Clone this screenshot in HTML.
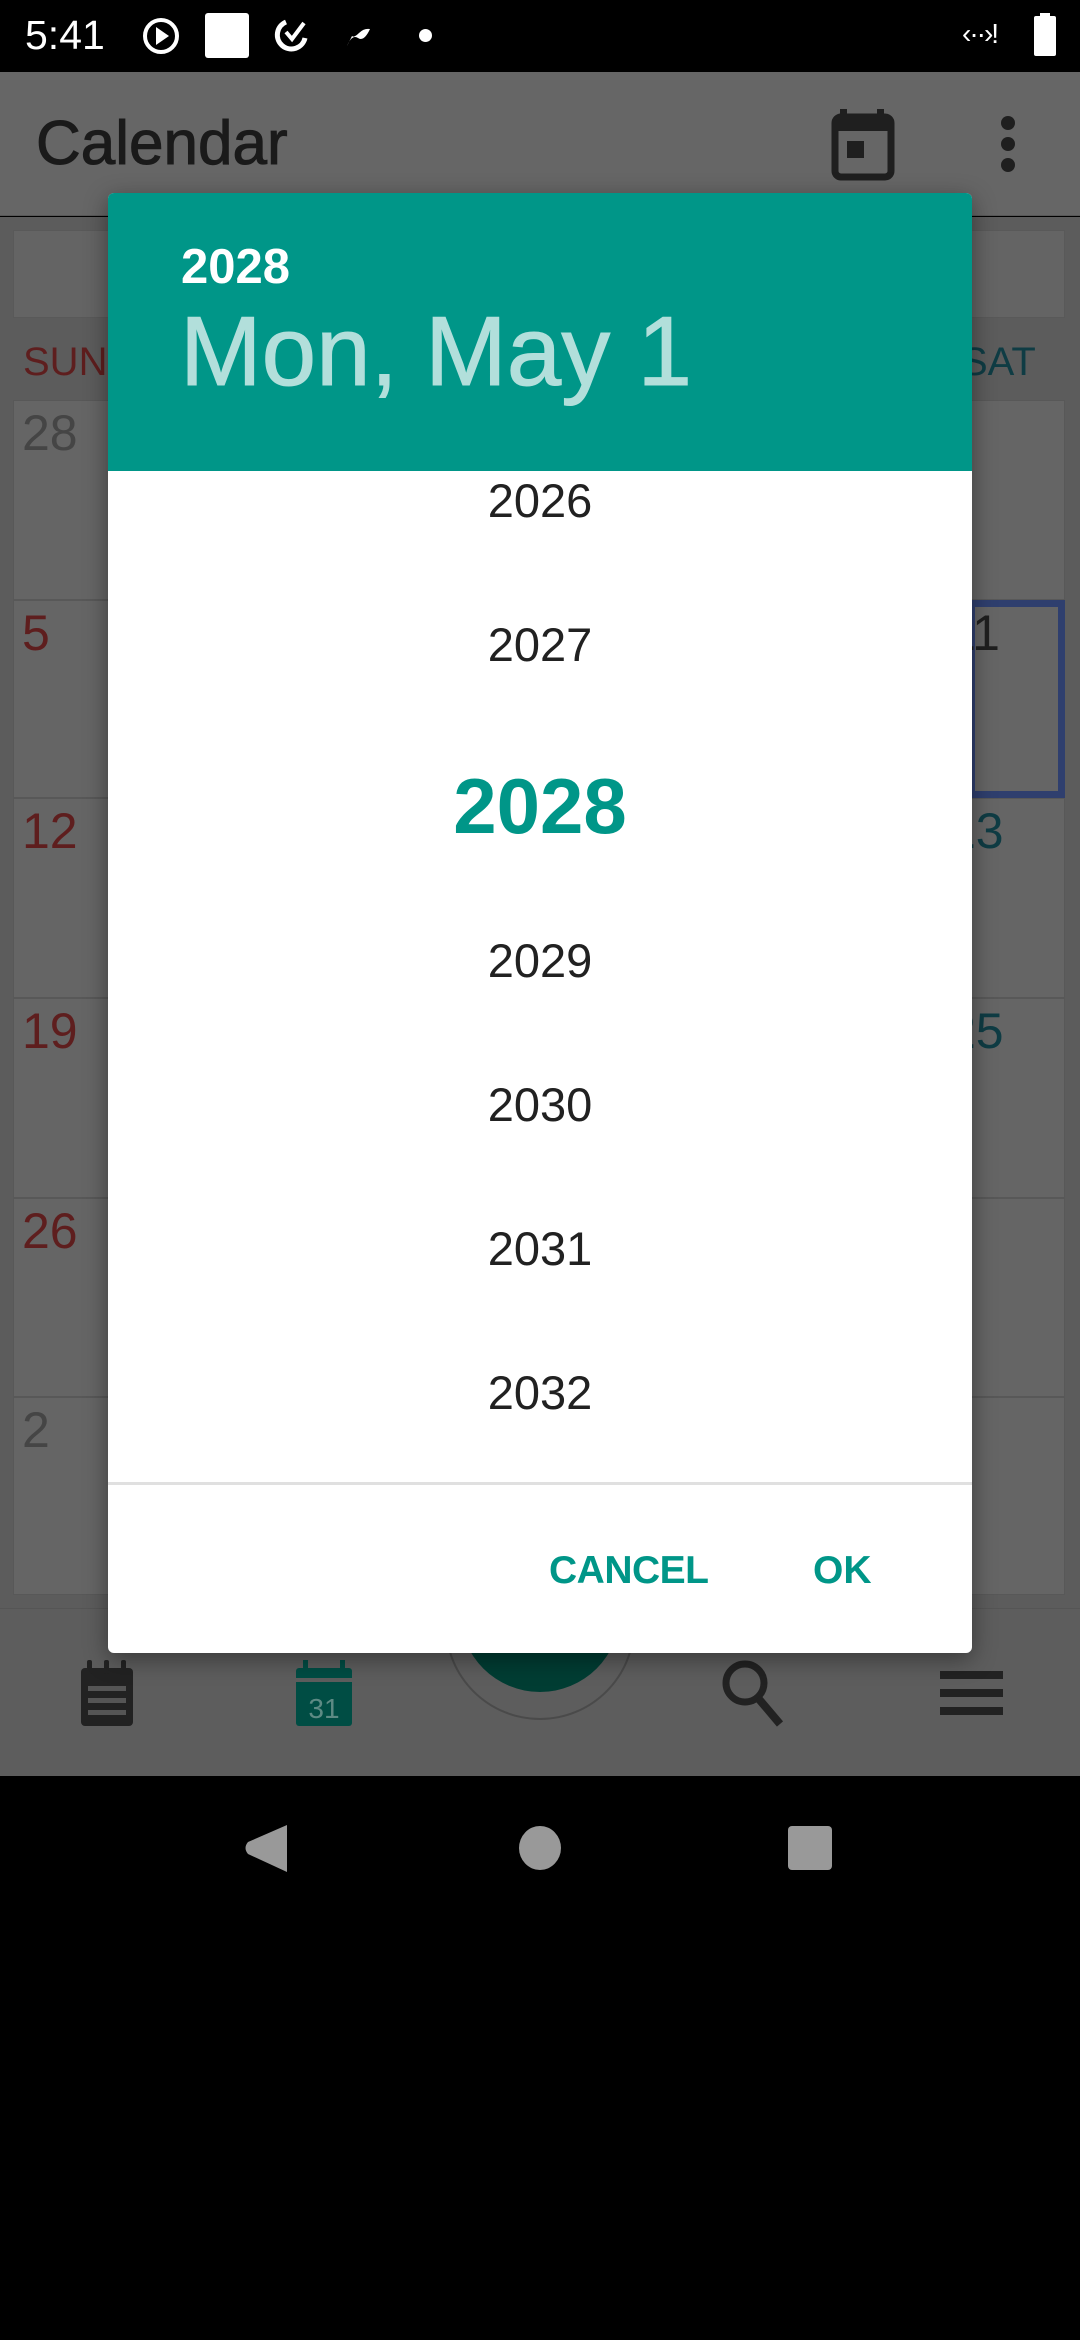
<!DOCTYPE html>
<html><head><meta charset="utf-8"><style>
*{margin:0;padding:0;box-sizing:border-box}
body{width:1080px;height:2340px;background:#000;position:relative;overflow:hidden;font-family:"Liberation Sans",Roboto,sans-serif}
.abs{position:absolute}
.cell{position:absolute;border:1px solid #585858;background:#656565}
</style></head><body>
<!-- status bar -->
<div class="abs" style="left:0;top:0;width:1080px;height:72px;background:#000"></div>
<div class="abs" style="left:25px;top:12px;color:#fff;font-size:41px">5:41</div>
<svg class="abs" style="left:138px;top:13px" width="48" height="46"><circle cx="23" cy="23" r="16" fill="none" stroke="#fff" stroke-width="4"/><path d="M18 14 L31 23 L18 32Z" fill="#fff"/></svg>
<div class="abs" style="left:205px;top:13px;width:44px;height:45px;background:#fff;border-radius:3px"></div>
<svg class="abs" style="left:272px;top:14px" width="40" height="42"><path d="M14 8 A14 14 0 1 0 33 24" fill="none" stroke="#fff" stroke-width="5"/><path d="M14 18 L20 25 L32 9" fill="none" stroke="#fff" stroke-width="4"/></svg>
<svg class="abs" style="left:344px;top:26px" width="30" height="22"><path d="M3 20 Q8 8 14 12 Q20 16 26 3 Q20 2 15 7 Q10 12 8 10Z" fill="#fff"/></svg>
<div class="abs" style="left:419px;top:29px;width:13px;height:13px;border-radius:50%;background:#fff"></div>
<div class="abs" style="left:962px;top:18px;color:#fff;font-size:28px;letter-spacing:-2px">‹··›!</div>
<div class="abs" style="left:1034px;top:16px;width:22px;height:40px;background:#fff;border-radius:2px"></div>
<div class="abs" style="left:1040px;top:13px;width:10px;height:5px;background:#fff"></div>

<!-- app bar -->
<div class="abs" style="left:0;top:72px;width:1080px;height:144px;background:#666;border-bottom:1px solid #575757"></div>
<div class="abs" style="left:36px;top:108px;font-size:62px;color:#1a1a1a;-webkit-text-stroke:1px #1a1a1a">Calendar</div>
<svg class="abs" style="left:830px;top:106px" width="70" height="76"><rect x="10" y="3" width="7" height="12" fill="#1f1f1f"/><rect x="47" y="3" width="7" height="12" fill="#1f1f1f"/><rect x="5" y="11" width="56" height="60" rx="6" fill="none" stroke="#1f1f1f" stroke-width="7"/><rect x="5" y="11" width="56" height="14" fill="#1f1f1f"/><rect x="17" y="35" width="17" height="17" fill="#1f1f1f"/></svg>
<div class="abs" style="left:1001px;top:116px;width:14px;height:14px;border-radius:50%;background:#1f1f1f"></div>
<div class="abs" style="left:1001px;top:137px;width:14px;height:14px;border-radius:50%;background:#1f1f1f"></div>
<div class="abs" style="left:1001px;top:158px;width:14px;height:14px;border-radius:50%;background:#1f1f1f"></div>

<!-- calendar area -->
<div class="abs" style="left:0;top:217px;width:1080px;height:1391px;background:#5c5c5c"></div>
<div class="abs" style="left:13px;top:230px;width:1052px;height:88px;background:#646464;border:1px solid #595959"></div>
<div class="abs" style="left:23px;top:340px;font-size:40px;color:#5e1e1e">SUN</div>
<div class="abs" style="left:961px;top:340px;font-size:40px;color:#0f3c44">SAT</div>

<div class="cell" style="left:13px;top:400px;width:1052px;height:200px"></div>
<div class="cell" style="left:13px;top:600px;width:1052px;height:198px"></div>
<div class="cell" style="left:13px;top:798px;width:1052px;height:200px"></div>
<div class="cell" style="left:13px;top:998px;width:1052px;height:200px"></div>
<div class="cell" style="left:13px;top:1198px;width:1052px;height:199px"></div>
<div class="cell" style="left:13px;top:1397px;width:1052px;height:198px"></div>
<div class="abs" style="left:968px;top:600px;width:97px;height:198px;border:7px solid #2f3f6e"></div>
<div class="abs" style="left:22px;top:404px;font-size:50px;color:#454545">28</div>
<div class="abs" style="left:22px;top:604px;font-size:50px;color:#5e1e1e">5</div>
<div class="abs" style="left:22px;top:802px;font-size:50px;color:#5e1e1e">12</div>
<div class="abs" style="left:22px;top:1002px;font-size:50px;color:#5e1e1e">19</div>
<div class="abs" style="left:22px;top:1202px;font-size:50px;color:#5e1e1e">26</div>
<div class="abs" style="left:22px;top:1401px;font-size:50px;color:#454545">2</div>
<div class="abs" style="left:948px;top:802px;font-size:50px;color:#0f3c44">13</div>
<div class="abs" style="left:948px;top:1002px;font-size:50px;color:#0f3c44">25</div>
<div class="abs" style="left:948px;top:604px;font-size:50px;color:#1f1f1f">11</div>

<!-- bottom nav -->
<div class="abs" style="left:0;top:1608px;width:1080px;height:168px;background:#5d5d5d;border-top:1px solid #555"></div>
<div class="abs" style="left:445px;top:1560px;width:190px;height:160px;border-radius:0 0 95px 95px;border:2px solid #4a4a4a;border-top:none"></div>
<div class="abs" style="left:460px;top:1560px;width:160px;height:132px;border-radius:0 0 80px 80px;background:#003d33"></div>
<svg class="abs" style="left:78px;top:1658px" width="60" height="70"><rect x="3" y="10" width="52" height="58" rx="4" fill="#222"/><rect x="9" y="2" width="5" height="14" rx="2" fill="#222"/><rect x="26" y="2" width="5" height="14" rx="2" fill="#222"/><rect x="43" y="2" width="5" height="14" rx="2" fill="#222"/><rect x="10" y="28" width="38" height="5" fill="#555"/><rect x="10" y="40" width="38" height="5" fill="#555"/><rect x="10" y="52" width="38" height="5" fill="#555"/></svg>
<svg class="abs" style="left:296px;top:1658px" width="58" height="70"><rect x="0" y="10" width="56" height="58" rx="3" fill="#004d44"/><rect x="7" y="2" width="5" height="12" fill="#004d44"/><rect x="44" y="2" width="5" height="12" fill="#004d44"/><rect x="0" y="20" width="56" height="4" fill="#5d5d5d"/><text x="28" y="60" font-size="28" fill="#5d8a84" text-anchor="middle" font-family="Liberation Sans">31</text></svg>
<svg class="abs" style="left:720px;top:1658px" width="70" height="72"><circle cx="25" cy="25" r="19" fill="none" stroke="#222" stroke-width="7"/><path d="M38 40 L60 66" stroke="#222" stroke-width="8"/></svg>
<div class="abs" style="left:940px;top:1671px;width:63px;height:8px;background:#222"></div>
<div class="abs" style="left:940px;top:1689px;width:63px;height:8px;background:#222"></div>
<div class="abs" style="left:940px;top:1707px;width:63px;height:8px;background:#222"></div>

<!-- system nav -->
<svg class="abs" style="left:240px;top:1820px" width="600" height="56"><path d="M47 5 L47 52 L8 34 Q3 28 8 22Z" fill="#999"/><ellipse cx="300" cy="28" rx="21" ry="22" fill="#999"/><rect x="548" y="6" width="44" height="44" rx="4" fill="#999"/></svg>

<!-- dialog -->
<div class="abs" style="left:108px;top:193px;width:864px;height:1460px;background:#fff;border-radius:6px;overflow:hidden;box-shadow:0 6px 24px rgba(0,0,0,.4)">
  <div class="abs" style="left:0;top:0;width:864px;height:278px;background:#009688"></div>
  <div class="abs" style="left:73px;top:46px;font-size:49px;color:#fff;font-weight:bold">2028</div>
  <div class="abs" style="left:72px;top:102px;font-size:98px;color:#b2dfdb;white-space:nowrap;-webkit-text-stroke:1px #b2dfdb">Mon, May 1</div>
  <div class="abs" style="left:0;top:278px;width:864px;text-align:center;color:#212121;font-size:47px">
    <div class="abs" style="left:0;width:864px;top:2px">2026</div>
    <div class="abs" style="left:0;width:864px;top:146px">2027</div>
    <div class="abs" style="left:0;width:864px;top:290px;font-size:78px;font-weight:bold;color:#009688">2028</div>
    <div class="abs" style="left:0;width:864px;top:462px">2029</div>
    <div class="abs" style="left:0;width:864px;top:606px">2030</div>
    <div class="abs" style="left:0;width:864px;top:750px">2031</div>
    <div class="abs" style="left:0;width:864px;top:894px">2032</div>
  </div>
  <div class="abs" style="left:0;top:1289px;width:864px;height:3px;background:#e0e0e0"></div>
  <div class="abs" style="left:441px;top:1356px;font-size:39px;font-weight:bold;color:#009688;letter-spacing:-0.5px">CANCEL</div>
  <div class="abs" style="left:705px;top:1356px;font-size:39px;font-weight:bold;color:#009688">OK</div>
</div>
</body></html>
